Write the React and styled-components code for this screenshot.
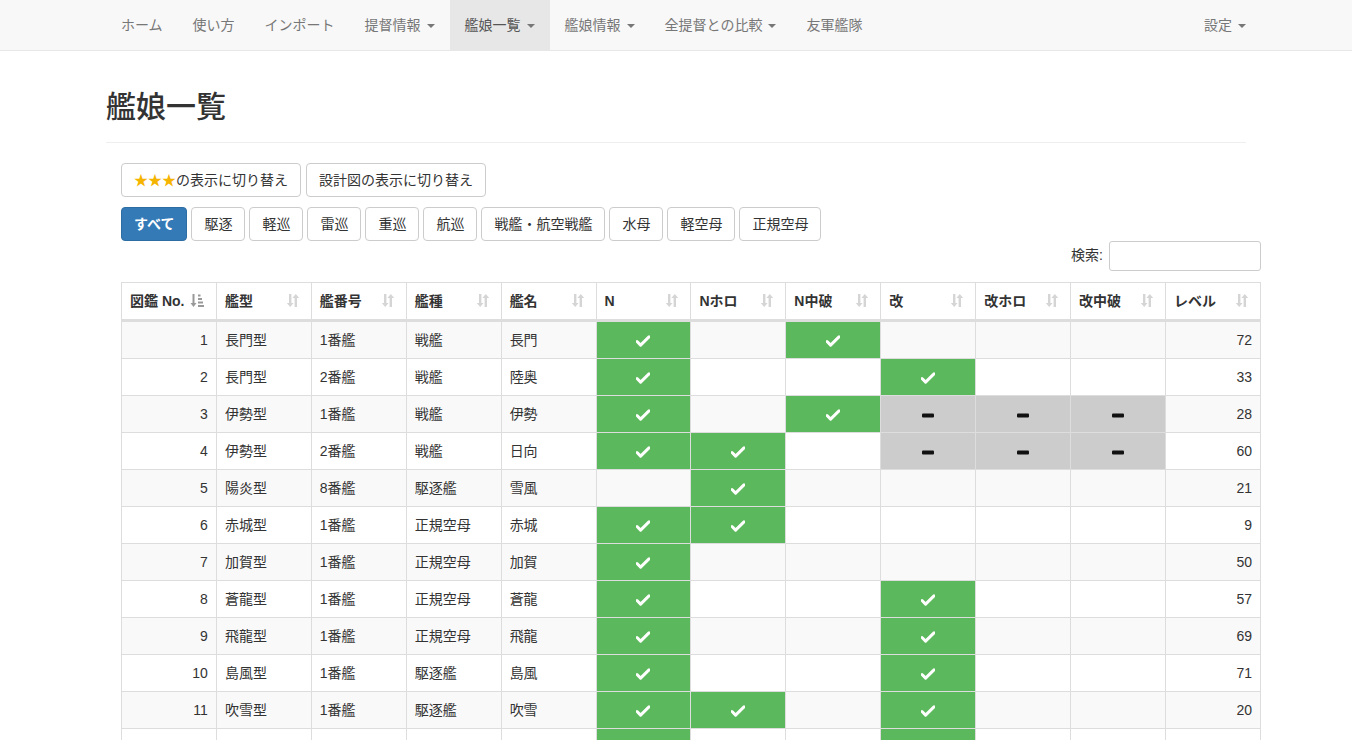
import styled, { createGlobalStyle } from "styled-components";

const GlobalStyle = createGlobalStyle`
  body {
    margin: 0;
    background: #fff;
    color: #333;
    font-family: "Liberation Sans", "Noto Sans CJK JP", sans-serif;
    font-size: 14px;
    line-height: 1.42857;
  }
  * {
    box-sizing: border-box;
  }
`;

const Navbar = styled.nav`
  height: 51px;
  background-color: #f8f8f8;
  border-bottom: 1px solid #e7e7e7;
`;

const NavInner = styled.div`
  width: 1170px;
  margin: 0 auto;
  padding: 0 15px;
  display: flex;
  justify-content: space-between;
`;

const NavList = styled.ul`
  margin: 0;
  margin-right: ${(p) => (p.right ? "-15px" : "0")};
  padding: 0;
  list-style: none;
  display: flex;
`;

const NavItem = styled.li`
  padding: 15px;
  line-height: 20px;
  color: ${(p) => (p.active ? "#555" : "#777")};
  background-color: ${(p) => (p.active ? "#e7e7e7" : "transparent")};
  display: flex;
  align-items: center;
  cursor: pointer;
`;

const Caret = styled.span`
  display: inline-block;
  width: 0;
  height: 0;
  margin-left: 6px;
  margin-top: 2px;
  border-top: 4px solid #777;
  border-left: 4px solid transparent;
  border-right: 4px solid transparent;
`;

const Container = styled.div`
  width: 1170px;
  margin: 0 auto;
  padding: 0 15px;
`;

const PageHeader = styled.div`
  margin-top: 39px;
  padding-bottom: 19px;
  border-bottom: 1px solid #eee;
`;

const Title = styled.h1`
  margin: 0;
  font-size: 30px;
  font-weight: 500;
  line-height: 1.1;
`;

const Section = styled.div`
  margin-left: 15px;
  width: 1140px;
`;

const BtnRow = styled.div`
  display: flex;
  gap: ${(p) => p.gap}px;
  margin-top: ${(p) => p.top}px;
`;

const Button = styled.button`
  font-family: inherit;
  font-size: 14px;
  line-height: 20px;
  padding: 6px 12px;
  border-radius: 4px;
  border: 1px solid ${(p) => (p.primary ? "#2e6da4" : "#ccc")};
  background-color: ${(p) => (p.primary ? "#337ab7" : "#fff")};
  color: ${(p) => (p.primary ? "#fff" : "#333")};
  font-weight: ${(p) => (p.primary ? "bold" : "normal")};
  cursor: pointer;
`;

const Stars = styled.span`
  color: #f5b400;
`;

const SearchRow = styled.div`
  display: flex;
  justify-content: flex-end;
  align-items: center;
`;

const SearchLabel = styled.label`
  display: flex;
  align-items: center;
  gap: 6px;
`;

const SearchInput = styled.input`
  width: 152px;
  height: 30px;
  border: 1px solid #ccc;
  border-radius: 3px;
  font-family: inherit;
  font-size: 14px;
`;

const Table = styled.table`
  margin-top: 11px;
  width: 1140px;
  table-layout: fixed;
  border-collapse: collapse;
  border: 1px solid #ddd;
`;

const Th = styled.th`
  position: relative;
  text-align: left;
  font-weight: bold;
  padding: 8px 30px 8px 8px;
  line-height: 20px;
  border: 1px solid #ddd;
  border-bottom-width: 3px;
  white-space: nowrap;
`;

const SortMark = styled.span`
  position: absolute;
  right: 12px;
  top: 11px;
  display: flex;
`;

const Tr = styled.tr`
  background-color: ${(p) => (p.odd ? "#f9f9f9" : "#fff")};
`;

const Td = styled.td`
  padding: 8px;
  line-height: 20px;
  border: 1px solid #ddd;
  text-align: ${(p) => p.align || "left"};
  background-color: ${(p) =>
    p.state === "ok" ? "#5cb85c" : p.state === "na" ? "#ccc" : "transparent"};
`;

const MarkBox = styled.span`
  display: inline-flex;
  vertical-align: middle;
`;

function SortIcon({ sorted }) {
  if (sorted) {
    return (
      <svg width="14" height="13" viewBox="0 0 14 13">
        <path d="M2.5 0h2v9h2L3.5 13 0.5 9h2z" fill="#999" />
        <rect x="8" y="0.5" width="2.5" height="2" fill="#999" />
        <rect x="8" y="4" width="4" height="2" fill="#999" />
        <rect x="8" y="7.5" width="5" height="2" fill="#999" />
        <rect x="8" y="11" width="6" height="2" fill="#999" />
      </svg>
    );
  }
  return (
    <svg width="12" height="13" viewBox="0 0 12 13">
      <path d="M2 0h2.4v9h2.2L3.2 13 -0.2 9H2z" fill="#d5d5d5" />
      <path d="M7.6 13h2.4V4h2.2L8.8 0 5.4 4h2.2z" fill="#d5d5d5" />
    </svg>
  );
}

function Check() {
  return (
    <MarkBox>
      <svg width="14" height="12" viewBox="0 0 14 12">
        <path d="M1 6.5l3.6 3.6L13 1.8" fill="none" stroke="#fff" strokeWidth="3" strokeLinejoin="round" strokeLinecap="round" />
      </svg>
    </MarkBox>
  );
}

function Dash() {
  return (
    <MarkBox>
      <svg width="12" height="5" viewBox="0 0 12 5">
        <rect x="0" y="0.5" width="12" height="4" rx="1" fill="#111" />
      </svg>
    </MarkBox>
  );
}

const columns = ["図鑑 No.", "艦型", "艦番号", "艦種", "艦名", "N", "Nホロ", "N中破", "改", "改ホロ", "改中破", "レベル"];

const types = ["駆逐", "軽巡", "雷巡", "重巡", "航巡", "戦艦・航空戦艦", "水母", "軽空母", "正規空母"];

// marks: o = ok, x = not available, . = empty (N, Nホロ, N中破, 改, 改ホロ, 改中破)
const ships = [
  [1, "長門型", "1番艦", "戦艦", "長門", "o.o...", 72],
  [2, "長門型", "2番艦", "戦艦", "陸奥", "o..o..", 33],
  [3, "伊勢型", "1番艦", "戦艦", "伊勢", "o.oxxx", 28],
  [4, "伊勢型", "2番艦", "戦艦", "日向", "oo.xxx", 60],
  [5, "陽炎型", "8番艦", "駆逐艦", "雪風", ".o....", 21],
  [6, "赤城型", "1番艦", "正規空母", "赤城", "oo....", 9],
  [7, "加賀型", "1番艦", "正規空母", "加賀", "o.....", 50],
  [8, "蒼龍型", "1番艦", "正規空母", "蒼龍", "o..o..", 57],
  [9, "飛龍型", "1番艦", "正規空母", "飛龍", "o..o..", 69],
  [10, "島風型", "1番艦", "駆逐艦", "島風", "o..o..", 71],
  [11, "吹雪型", "1番艦", "駆逐艦", "吹雪", "oo.o..", 20],
  [12, "吹雪型", "2番艦", "駆逐艦", "白雪", "o..o..", 18],
];

const navLeft = [
  { label: "ホーム" },
  { label: "使い方" },
  { label: "インポート" },
  { label: "提督情報", menu: true },
  { label: "艦娘一覧", menu: true, active: true },
  { label: "艦娘情報", menu: true },
  { label: "全提督との比較", menu: true },
  { label: "友軍艦隊" },
];

export default function App() {
  return (
    <>
      <GlobalStyle />
      <Navbar>
        <NavInner>
          <NavList>
            {navLeft.map((n) => (
              <NavItem key={n.label} active={n.active}>
                {n.label}
                {n.menu && <Caret />}
              </NavItem>
            ))}
          </NavList>
          <NavList right>
            <NavItem>
              設定
              <Caret />
            </NavItem>
          </NavList>
        </NavInner>
      </Navbar>
      <Container>
        <PageHeader>
          <Title>艦娘一覧</Title>
        </PageHeader>
        <Section>
          <BtnRow top={20} gap={5}>
            <Button>
              <Stars>★★★</Stars>の表示に切り替え
            </Button>
            <Button>設計図の表示に切り替え</Button>
          </BtnRow>
          <BtnRow top={10} gap={4}>
            <Button primary>すべて</Button>
            {types.map((t) => (
              <Button key={t}>{t}</Button>
            ))}
          </BtnRow>
          <SearchRow>
            <SearchLabel>
              検索:
              <SearchInput type="search" />
            </SearchLabel>
          </SearchRow>
          <Table>
            <thead>
              <tr>
                {columns.map((c, i) => (
                  <Th key={c}>
                    {c}
                    <SortMark>
                      <SortIcon sorted={i === 0} />
                    </SortMark>
                  </Th>
                ))}
              </tr>
            </thead>
            <tbody>
              {ships.map(([no, cls, num, kind, name, marks, lv], i) => (
                <Tr key={no} odd={i % 2 === 0}>
                  <Td align="right">{no}</Td>
                  <Td>{cls}</Td>
                  <Td>{num}</Td>
                  <Td>{kind}</Td>
                  <Td>{name}</Td>
                  {marks.split("").map((m, j) => (
                    <Td key={j} align="center" state={m === "o" ? "ok" : m === "x" ? "na" : undefined}>
                      {m === "o" && <Check />}
                      {m === "x" && <Dash />}
                    </Td>
                  ))}
                  <Td align="right">{lv}</Td>
                </Tr>
              ))}
            </tbody>
          </Table>
        </Section>
      </Container>
    </>
  );
}
